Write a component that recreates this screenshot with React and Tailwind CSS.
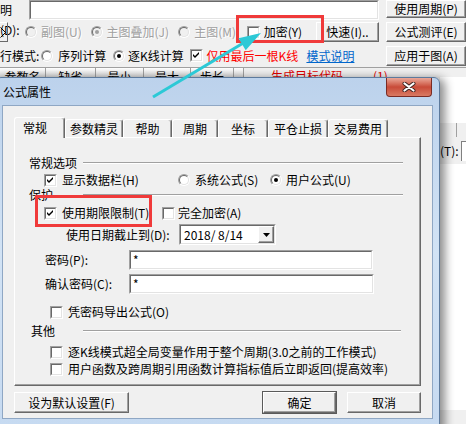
import React from "react";

function Check({ checked }) {
  return (
    <span className="inline-flex w-[13px] h-[13px] shrink-0 border border-t-[#a0a0a0] border-l-[#a0a0a0] border-r-white border-b-white">
      <span className="flex flex-1 items-center justify-center border border-t-[#696969] border-l-[#696969] border-r-[#e3e3e3] border-b-[#e3e3e3] bg-white">
        {checked && (
          <svg width="7" height="7" viewBox="0 0 7 7">
            <path d="M0 2L2 4L6 0V2L2 6L0 4Z" fill="#000" />
          </svg>
        )}
      </span>
    </span>
  );
}

function Radio({ on, disabled }) {
  return (
    <span className="inline-flex w-[12px] h-[12px] shrink-0 rounded-full border border-t-[#a0a0a0] border-l-[#a0a0a0] border-r-white border-b-white">
      <span
        className={`flex flex-1 items-center justify-center rounded-full border border-t-[#696969] border-l-[#696969] border-r-[#e3e3e3] border-b-[#e3e3e3] ${
          disabled ? "bg-[#f0f0f0]" : "bg-white"
        }`}
      >
        {on && <span className={`w-[4px] h-[4px] rounded-full ${disabled ? "bg-[#a0a0a0]" : "bg-black"}`} />}
      </span>
    </span>
  );
}

function Btn({ children, className = "" }) {
  return (
    <div
      className={`flex shrink-0 items-center justify-center bg-[#f0f0f0] border border-t-white border-l-white border-r-[#696969] border-b-[#696969] shadow-[inset_-1px_-1px_0_#a0a0a0] ${className}`}
    >
      {children}
    </div>
  );
}

function Field({ children, className = "" }) {
  return (
    <div className={`flex shrink-0 border border-t-[#a0a0a0] border-l-[#a0a0a0] border-r-white border-b-white ${className}`}>
      <div className="flex flex-1 items-center border border-t-[#696969] border-l-[#696969] border-r-[#e3e3e3] border-b-[#e3e3e3] bg-white pl-[2px]">
        {children}
      </div>
    </div>
  );
}

function Etched() {
  return <div className="flex-1 self-center border-t border-t-[#a0a0a0] border-b border-b-white" />;
}

const tabs = [
  ["参数精灵", 58],
  ["帮助", 49],
  ["周期", 46],
  ["坐标", 50],
  ["平仓止损", 60],
  ["交易费用", 60],
];

export default function App() {
  return (
    <div className="relative w-[466px] h-[424px] overflow-hidden bg-[#f0f0f0] text-[12px] leading-[14px] text-black font-['Noto_Sans_CJK_SC','Liberation_Sans',sans-serif]">
      {/* window behind the dialog */}
      <div className="flex h-[20px]">
        <span className="w-[36px] leading-[20px]">明(D):</span>
        <Field className="w-[350px] h-[20px]" />
        <Btn className="ml-[7px] w-[80px] h-[18px]">使用周期(P)</Btn>
      </div>

      <div className="mt-[2px] flex h-[20px] items-center">
        <div className="flex w-[8px] h-[20px] items-center justify-end pr-[1px] border-r border-b border-r-[#696969] border-b-[#696969] border-t border-t-white">
          <svg width="6" height="11" viewBox="0 0 6 11">
            <polyline points="0.5,0.5 5.5,5.5 0.5,10.5" fill="none" stroke="#000" strokeWidth="1" />
          </svg>
        </div>
        <div className="ml-[17px] flex w-[68px] items-center gap-[4px] text-[#a0a0a0] [text-shadow:1px_1px_0_#fff]">
          <Radio disabled />
          <span>副图(U)</span>
        </div>
        <div className="flex w-[89px] items-center gap-[3px] text-[#a0a0a0] [text-shadow:1px_1px_0_#fff]">
          <Radio on disabled />
          <span>主图叠加(J)</span>
        </div>
        <div className="flex w-[70px] items-center gap-[4px] text-[#a0a0a0] [text-shadow:1px_1px_0_#fff]">
          <Radio disabled />
          <span>主图(M)</span>
        </div>
        <div className="flex w-[71px] items-center gap-[4px]">
          <Check />
          <span>加密(Y)</span>
        </div>
        <Btn className="w-[63px] h-[20px]">快速(I)..</Btn>
        <Btn className="ml-[7px] w-[80px] h-[20px]">公式测评(E)</Btn>
      </div>

      <div className="mt-[3px] flex h-[21px] items-center">
        <span className="w-[42px]">行模式:</span>
        <div className="flex w-[73px] items-center gap-[5px]">
          <Radio />
          <span>序列计算</span>
        </div>
        <div className="flex w-[78px] items-center gap-[3px]">
          <Radio on />
          <span>逐K线计算</span>
        </div>
        <div className="flex w-[119px] items-center gap-[4px]">
          <Check checked />
          <span className="text-[#ff0000]">仅用最后一根K线</span>
        </div>
        <span className="w-[81px] text-[#0066cc] underline">模式说明</span>
        <Btn className="self-end w-[80px] h-[20px]">应用于图(A)</Btn>
      </div>

      <div className="mt-[1px] flex h-[10px] overflow-hidden border-t border-t-[#a0a0a0]">
        <div className="flex w-[46px] justify-center pt-[2px] bg-gradient-to-b from-white to-[#dcdcdc] border-r border-r-[#a0a0a0]">参数名</div>
        <div className="flex w-[50px] justify-center pt-[2px] bg-gradient-to-b from-white to-[#dcdcdc] border-r border-r-[#a0a0a0]">缺省</div>
        <div className="flex w-[48px] justify-center pt-[2px] bg-gradient-to-b from-white to-[#dcdcdc] border-r border-r-[#a0a0a0]">最小</div>
        <div className="flex w-[47px] justify-center pt-[2px] bg-gradient-to-b from-white to-[#dcdcdc] border-r border-r-[#a0a0a0]">最大</div>
        <div className="flex w-[43px] justify-center pt-[2px] bg-gradient-to-b from-white to-[#dcdcdc] border-r border-r-[#a0a0a0]">步长</div>
        <div className="w-[10px] bg-gradient-to-b from-white to-[#dcdcdc] border-r border-r-[#a0a0a0]" />
        <span className="ml-[27px] pt-[1px] text-[#e00000]">生成目标代码</span>
        <span className="ml-[30px] pt-[1px] text-[#e00000]">(1)</span>
      </div>

      <div className="flex justify-end">
        <div className="flex w-[26px] flex-col">
          <div className="h-[46px] bg-white" />
          <div className="h-[14px] pl-[16px]">
            <div className="h-full border-l border-l-[#a0a0a0]" />
          </div>
          <div className="flex h-[27px] items-center">
            <span>(T):</span>
            <div className="ml-[2px] h-[20px] flex-1 bg-white border-l border-t border-[#808080]" />
          </div>
          <div className="h-[246px] bg-white" />
        </div>
      </div>

      {/* dialog window */}
      <div className="absolute left-[-5px] top-[77px] flex w-[445px] h-[352px] flex-col rounded-t-[6px] bg-gradient-to-b from-[#bcd2ec] via-[#d2e3f5] to-[#c6daf1] border border-[#5d7a9c] shadow-[3px_3px_10px_2px_rgba(0,0,0,0.45)]">
        <div className="relative flex h-[27px] shrink-0 items-center pl-[7px] text-[12px]">
          公式属性
          <div className="absolute right-[7px] top-[0px] flex w-[46px] h-[19px] items-center justify-center rounded-b-[4px] border border-t-0 border-[#7a2b24] bg-gradient-to-b from-[#e9a899] via-[#c84a38] to-[#d97a63]">
            <svg width="14" height="10" viewBox="0 0 14 10">
              <path d="M2.5 1.5L11.5 8.5M11.5 1.5L2.5 8.5" stroke="#3b2320" strokeWidth="4" strokeLinecap="round" />
              <path d="M2.5 1.5L11.5 8.5M11.5 1.5L2.5 8.5" stroke="#fff" strokeWidth="2.2" strokeLinecap="round" />
            </svg>
          </div>
        </div>

        <div className="ml-[6px] flex w-[431px] h-[314px] flex-col border border-[#8fa7c4] bg-[#f0f0f0] px-[11px] pt-[11px]">
          <div className="flex h-[20px] items-end">
            <div className="relative z-10 -mb-[1px] flex w-[51px] h-[21px] items-center pl-[8px] rounded-t-[3px] border border-b-0 border-t-white border-l-white border-r-[#696969] bg-[#f0f0f0] shadow-[inset_-1px_0_0_#a0a0a0]">
              常规
            </div>
            {tabs.map(([t, w]) => (
              <div
                key={t}
                style={{ width: w }}
                className="flex h-[18px] items-center justify-center rounded-t-[3px] border border-b-0 border-t-white border-l-white border-r-[#696969] shadow-[inset_-1px_0_0_#a0a0a0]"
              >
                {t}
              </div>
            ))}
          </div>

          <div className="flex w-[407px] h-[249px] flex-col border border-t-white border-l-white border-r-[#696969] border-b-[#696969] shadow-[inset_-1px_-1px_0_#a0a0a0]">
            <div className="mt-[18px] flex h-[14px] pl-[14px] pr-[17px]">
              <span className="w-[54px]">常规选项</span>
              <Etched />
            </div>
            <div className="mt-[3px] flex h-[14px] items-center pl-[29px]">
              <div className="flex w-[134px] items-center gap-[5px]">
                <Check checked />
                <span>显示数据栏(H)</span>
              </div>
              <div className="flex w-[92px] items-center gap-[5px]">
                <Radio />
                <span>系统公式(S)</span>
              </div>
              <div className="flex items-center gap-[4px]">
                <Radio on />
                <span>用户公式(U)</span>
              </div>
            </div>
            <div className="mt-[1px] flex h-[14px] pl-[14px] pr-[17px]">
              <span className="w-[54px]">保护</span>
              <Etched />
            </div>
            <div className="mt-[4px] flex h-[14px] items-center pl-[29px]">
              <div className="flex w-[118px] items-center gap-[5px]">
                <Check checked />
                <span>使用期限限制(T)</span>
              </div>
              <div className="flex items-center gap-[3px]">
                <Check />
                <span>完全加密(A)</span>
              </div>
            </div>
            <div className="mt-[4px] flex h-[21px] items-center pl-[51px]">
              <span className="w-[113px]">使用日期截止到(D):</span>
              <Field className="w-[97px] h-[21px]">
                <span className="flex-1 pl-[1px]">2018/ 8/14</span>
                <Btn className="w-[16px] h-full">
                  <svg width="7" height="4" viewBox="0 0 7 4">
                    <path d="M0 0H7L3.5 4Z" fill="#000" />
                  </svg>
                </Btn>
              </Field>
            </div>
            <div className="mt-[5px] flex h-[20px] items-center pl-[30px]">
              <span className="w-[84px]">密码(P):</span>
              <Field className="w-[244px] h-[20px]">
                <span>*</span>
              </Field>
            </div>
            <div className="mt-[4px] flex h-[20px] items-center pl-[30px]">
              <span className="w-[84px]">确认密码(C):</span>
              <Field className="w-[245px] h-[20px]">
                <span>*</span>
              </Field>
            </div>
            <div className="mt-[11px] flex h-[14px] items-center gap-[5px] pl-[35px]">
              <Check />
              <span>凭密码导出公式(O)</span>
            </div>
            <div className="mt-[5px] flex h-[14px] pl-[16px] pr-[19px]">
              <span className="w-[52px]">其他</span>
              <Etched />
            </div>
            <div className="mt-[7px] flex h-[14px] items-center gap-[5px] pl-[35px]">
              <Check />
              <span>逐K线模式超全局变量作用于整个周期(3.0之前的工作模式)</span>
            </div>
            <div className="mt-[3px] flex h-[14px] items-center gap-[5px] pl-[35px]">
              <Check />
              <span>用户函数及跨周期引用函数计算指标值后立即返回(提高效率)</span>
            </div>
          </div>

          <div className="mt-[6px] flex h-[21px]">
            <Btn className="w-[115px] h-[21px]">设为默认设置(F)</Btn>
            <Btn className="ml-auto w-[73px] h-[21px] outline outline-1 outline-[#5a5a5a]">确定</Btn>
            <Btn className="ml-[11px] w-[74px] h-[21px]">取消</Btn>
          </div>
        </div>
      </div>

      {/* annotations */}
      <div className="absolute left-[236px] top-[15px] w-[88px] h-[28px] border-[3px] border-[#f03a3a]" />
      <div className="absolute left-[35px] top-[195px] w-[117px] h-[32px] border-[3px] border-[#f03a3a]" />
      <svg className="absolute left-0 top-0 pointer-events-none" width="466" height="424" viewBox="0 0 466 424">
        <line x1="153" y1="97" x2="245" y2="42" stroke="#2cc9d6" strokeWidth="3" />
        <polygon points="261,33 245.7,50.2 238.5,38.2" fill="#2cc9d6" />
      </svg>
    </div>
  );
}
